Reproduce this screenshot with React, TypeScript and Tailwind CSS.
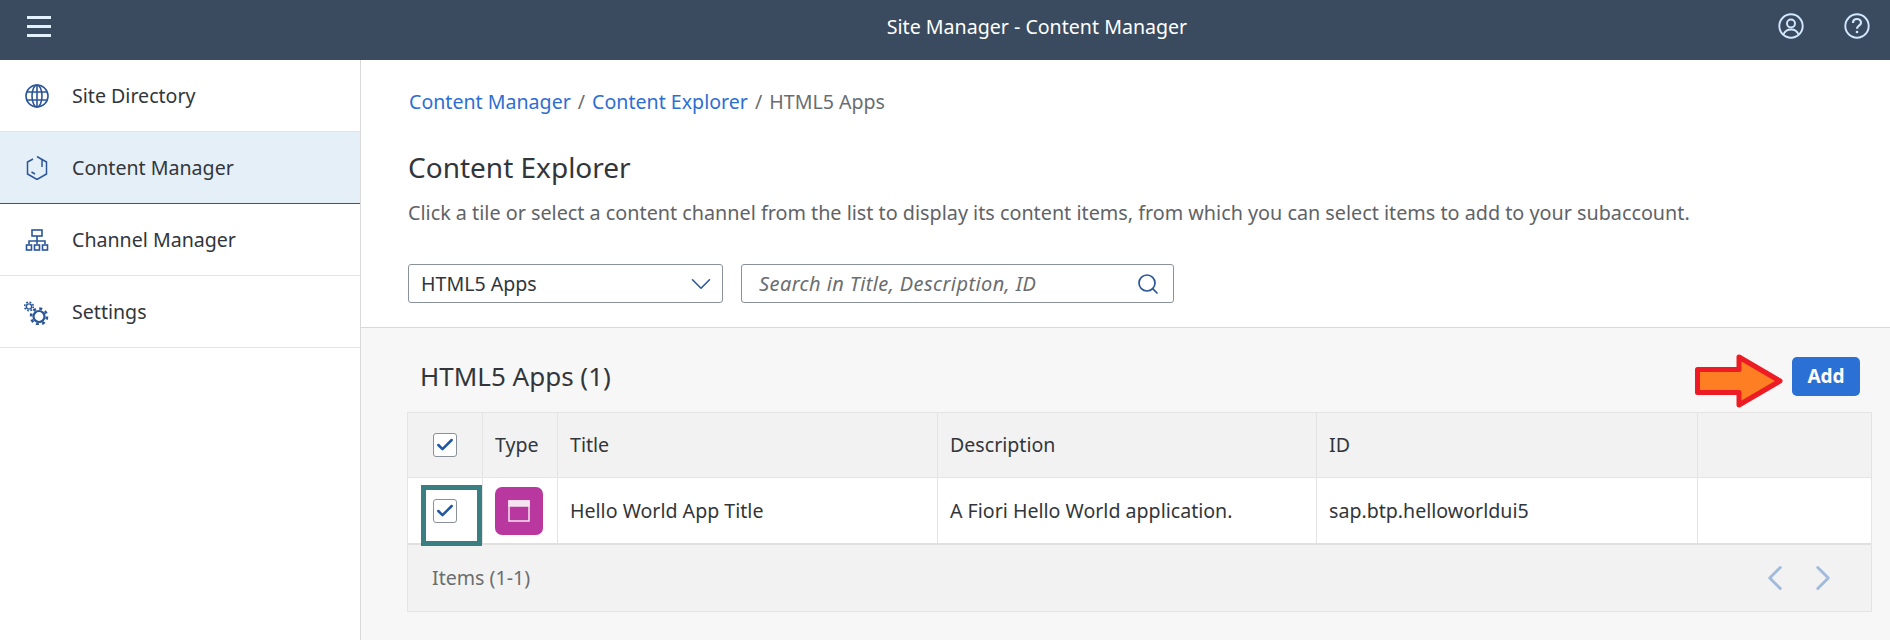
import React from 'react';
import { ChevronDown, ChevronLeft, ChevronRight, Search, Check } from 'lucide-react';

const FONT = "font-['Noto_Sans',sans-serif]";

const GlobeIcon = () => (
  <svg width="24" height="24" viewBox="0 0 24 24" fill="none" stroke="#2a5699" strokeWidth="1.6">
    <circle cx="12" cy="12" r="11" />
    <ellipse cx="12" cy="12" rx="5" ry="11" />
    <path d="M2 8h20M2 16h20M12 1v22" />
  </svg>
);

const BoxIcon = () => (
  <svg width="24" height="24" viewBox="0 0 24 24" fill="none" stroke="#2a5699" strokeWidth="1.5">
    <path d="M8 3 2.500 6V18L12 23.500 21.500 18V6L12 0.500 17 3.500V11" />
    <path d="M6.500 16 10 18" />
  </svg>
);

const TreeIcon = () => (
  <svg width="24" height="24" viewBox="0 0 24 24" fill="none" stroke="#2a5699" strokeWidth="1.6">
    <rect x="7" y="2" width="10" height="6" />
    <path d="M12 8v5M4 16v-3h16v3M12 13v3" />
    <rect x="1.500" y="17" width="5" height="5" />
    <rect x="9.500" y="17" width="5" height="5" />
    <rect x="17.500" y="17" width="5" height="5" />
  </svg>
);

const GearsIcon = () => (
  <svg width="26" height="26" viewBox="0 0 26 26" fill="none" stroke="#2a5699">
    <circle cx="15" cy="17.500" r="5.500" strokeWidth="2.200" />
    <circle cx="15" cy="17.500" r="8" strokeWidth="2.600" strokeDasharray="3 3.280" />
    <circle cx="5" cy="7.500" r="2.600" strokeWidth="1.400" />
    <circle cx="5" cy="7.500" r="4.300" strokeWidth="1.600" strokeDasharray="1.800 1.580" />
  </svg>
);

const UserIcon = () => (
  <svg width="26" height="26" viewBox="0 0 26 26" fill="none" stroke="#d1e8ff" strokeWidth="1.900">
    <circle cx="13" cy="13" r="11.700" />
    <circle cx="13" cy="10.500" r="4" />
    <path d="M5.500 21.500C7 17.500 10 16.500 13 16.500s6 1 7.500 5" />
  </svg>
);

const HelpIcon = () => (
  <svg width="26" height="26" viewBox="0 0 26 26" fill="none" stroke="#d1e8ff" strokeWidth="1.900">
    <circle cx="13" cy="13" r="11.700" />
    <path d="M9 10c0-2.500 1.800-4 4-4s4 1.500 4 3.700c0 3-4 3-4 6" strokeWidth="2.200" />
    <circle cx="13" cy="19" r="1.300" fill="#d1e8ff" stroke="none" />
  </svg>
);

const navItems = [
  { label: 'Site Directory', icon: <GlobeIcon /> },
  { label: 'Content Manager', icon: <BoxIcon />, active: true },
  { label: 'Channel Manager', icon: <TreeIcon /> },
  { label: 'Settings', icon: <GearsIcon /> },
];

const Checkbox = () => (
  <div className="w-6 h-6 bg-white border border-[#89919a] rounded-[3px] flex items-center justify-center">
    <Check size={20} strokeWidth={3} className="text-[#1f57a4]" />
  </div>
);

const cols = 'grid grid-cols-[75px_75px_380px_379px_381px_1fr]';

export default function App() {
  return (
    <div className={`${FONT} w-[1890px] h-[640px] overflow-hidden bg-white text-[#32363a] flex flex-col`}>
      {/* Shell bar */}
      <header className="h-[60px] shrink-0 bg-[#3a4b60] relative flex items-center justify-between pl-[27px] pr-[20px]">
        <div className="w-[24px] flex flex-col gap-[6px] -mt-[8px]">
          <div className="h-[3px] bg-[#e3f0fd]" />
          <div className="h-[3px] bg-[#e3f0fd]" />
          <div className="h-[3px] bg-[#e3f0fd]" />
        </div>
        <div className="absolute left-[184px] right-0 top-[15px] text-center text-white text-[19.6px] leading-[24px]">
          Site Manager - Content Manager
        </div>
        <div className="flex items-center gap-[40px] -mt-[8px]">
          <UserIcon />
          <HelpIcon />
        </div>
      </header>

      <div className="flex flex-1 min-h-0">
        {/* Side nav */}
        <nav className="w-[361px] shrink-0 border-r border-[#d9d9d9]">
          {navItems.map((item) => (
            <div
              key={item.label}
              className={`h-[72px] flex items-center pl-[24px] border-b ${
                item.active ? 'bg-[#e5eff8] border-[#2a5699]' : 'border-[#e4e4e4]'
              }`}
            >
              <div className="w-[26px] flex justify-center">{item.icon}</div>
              <span className="ml-[22px] text-[19.6px] leading-[24px]">{item.label}</span>
            </div>
          ))}
        </nav>

        {/* Content */}
        <main className="flex-1 min-w-0 flex flex-col">
          <div className="h-[268px] shrink-0 pl-[47px] pt-[30px] border-b border-[#d9d9d9]">
            <div className="pl-[1px] text-[19.6px] leading-[24px] text-[#6a6d70] flex gap-[7px]">
              <span className="text-[#2d6ed3]">Content Manager</span>
              <span>/</span>
              <span className="text-[#2d6ed3]">Content Explorer</span>
              <span>/</span>
              <span>HTML5 Apps</span>
            </div>
            <h1 className="mt-[35px] text-[28px] leading-[36px] font-normal">Content Explorer</h1>
            <p className="mt-[16px] text-[19.78px] leading-[24px] text-[#5f6366]">
              Click a tile or select a content channel from the list to display its content items, from which you can select items to add to your subaccount.
            </p>
            <div className="mt-[39px] flex gap-[18px]">
              <div className="w-[315px] h-[39px] border border-[#89919a] rounded-[3px] flex items-center justify-between pl-[12px] pr-[4px] text-[19.6px]">
                <span>HTML5 Apps</span>
                <ChevronDown size={34} strokeWidth={1.1} className="text-[#2a5699]" />
              </div>
              <div className="w-[433px] h-[39px] border border-[#89919a] rounded-[3px] flex items-center justify-between pl-[17px] pr-[13px] text-[20px] tracking-[0.4px]">
                <span className="italic text-[#6a6d70]">Search in Title, Description, ID</span>
                <Search size={24} strokeWidth={1.7} className="text-[#2a5699]" />
              </div>
            </div>
          </div>

          <section className="flex-1 bg-[#f7f7f7] pl-[46px] pr-[18px] relative">
            <div className="h-[84px] flex items-start justify-between pt-[29px] pl-[13px] pr-[12px]">
              <h2 className="mt-[3px] text-[26px] leading-[32px] font-normal">HTML5 Apps (1)</h2>
              <div className="relative">
                <svg className="absolute left-[-98px] top-[-3px]" width="90" height="54" viewBox="0 0 90 54">
                  <path d="M3.500 15.500H45V3L86 27 45 51V38.500H3.500Z" fill="#fd7e23" stroke="#ed1c24" strokeWidth="5" strokeLinejoin="round" />
                </svg>
                <button className="w-[68px] h-[39px] rounded-[5px] bg-[#2b70d4] text-white text-[19px] font-bold">Add</button>
              </div>
            </div>

            <div className="border border-[#e4e4e4]">
              <div className={`${cols} h-[65px] bg-[#f2f2f2] border-b border-[#e4e4e4] text-[19.6px]`}>
                <div className="flex items-center justify-center border-r border-[#e4e4e4]"><Checkbox /></div>
                <div className="flex items-center pl-[12px] border-r border-[#e4e4e4]">Type</div>
                <div className="flex items-center pl-[12px] border-r border-[#e4e4e4]">Title</div>
                <div className="flex items-center pl-[12px] border-r border-[#e4e4e4]">Description</div>
                <div className="flex items-center pl-[12px] border-r border-[#e4e4e4]">ID</div>
                <div />
              </div>
              <div className={`${cols} h-[67px] bg-white border-b-2 border-[#e0e0e0] text-[19.6px]`}>
                <div className="relative flex items-center justify-center border-r border-[#e4e4e4]">
                  <Checkbox />
                  <div className="absolute left-[13px] top-[7px] w-[61px] h-[61px] border-[5px] border-[#397e80]" />
                </div>
                <div className="flex items-center pl-[12px] border-r border-[#e4e4e4]">
                  <div className="w-[48px] h-[48px] rounded-[7px] bg-[#b8389f] flex items-center justify-center">
                    <svg width="22" height="22" viewBox="0 0 22 22" fill="none" stroke="#f5e3f1" strokeWidth="1.500">
                      <rect x="1" y="1" width="20" height="20" />
                      <rect x="1" y="1" width="20" height="5" fill="#f5e3f1" />
                    </svg>
                  </div>
                </div>
                <div className="flex items-center pl-[12px] border-r border-[#e4e4e4]">Hello World App Title</div>
                <div className="flex items-center pl-[12px] border-r border-[#e4e4e4]">A Fiori Hello World application.</div>
                <div className="flex items-center pl-[12px] border-r border-[#e4e4e4]">sap.btp.helloworldui5</div>
                <div />
              </div>
              <div className="h-[66px] bg-[#f2f2f2] flex items-center justify-between pl-[24px] pr-[27px] text-[19.6px] text-[#6a6d70]">
                <span>Items (1-1)</span>
                <div className="flex items-center gap-[6px] text-[#a3bbdb]">
                  <ChevronLeft size={42} strokeWidth={1.7} />
                  <ChevronRight size={42} strokeWidth={1.7} />
                </div>
              </div>
            </div>
          </section>
        </main>
      </div>
    </div>
  );
}
